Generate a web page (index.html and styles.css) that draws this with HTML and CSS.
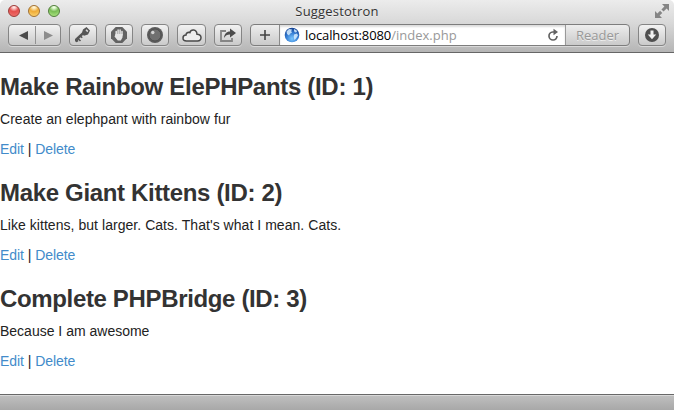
FILE: index.html
```html
<!DOCTYPE html>
<html lang="en">
<head>
<meta charset="utf-8">
<title>Suggestotron</title>
<link rel="stylesheet" href="styles.css">
</head>
<body>
<div class="window">
  <header class="chrome">
    <div class="titlebar">
      <div class="lights"><i class="light red"></i><i class="light yellow"></i><i class="light green"></i></div>
      <span class="title">Suggestotron</span>
      <svg class="expand" width="16" height="16" viewBox="0 0 16 16"><path d="M8 1h7v7l-2.400-2.400-3 3L7.400 6.400l3-3zM1 8v7h7l-2.400-2.400 2.700-2.700-2.200-2.200-2.700 2.700z" fill="#858585"/></svg>
    </div>
    <div class="toolbar">
      <div class="btn nav">
        <svg width="50" height="20" viewBox="0 0 50 20"><path d="M9 10.500l9-4.500v9z" fill="#4b4b4b"/><path d="M25.500 1v18" stroke="#929292"/><path d="M43 10.500L34 6v9z" fill="#8c8c8c"/></svg>
      </div>
      <div class="btn key"><svg width="20" height="20" viewBox="0 0 20 20"><path d="M10 4.500L13.500 2l3.500 3.500-2 4-4 1.300-1-.8-4.800 4.800v1.700l-2 .8-1.200-1.200v-2L9 7.500z" fill="#555"/><path d="M4.500 13l3 3M7 10.500l2.200 2.200" stroke="#555" stroke-width="1.600"/><path d="M13 4.800l1.800 1.800" stroke="#ddd" stroke-width="1.500"/></svg></div>
      <div class="btn hand"><svg width="18" height="18" viewBox="0 0 18 18"><path d="M5.700 1h6.600L17 5.700v6.600L12.300 17H5.700L1 12.300V5.700z" fill="#626262"/><path d="M6.200 9V5.500M8.100 8V4M10.100 8V4M12 9V5.500" stroke="#e4e4e4" stroke-width="1.500" stroke-linecap="round"/><path d="M5.500 8h7.200l-.2 3.500-1.700 3H7.800L4.500 10.500l.5-1z" fill="#e4e4e4"/></svg></div>
      <div class="btn eye"><svg width="18" height="18" viewBox="0 0 18 18"><circle cx="9" cy="9" r="8" fill="#5c5c5c"/><circle cx="9" cy="9" r="6" fill="#707070" stroke="#494949" stroke-width=".8"/><circle cx="6.800" cy="6.500" r="1.700" fill="#d4d4d4"/></svg></div>
      <div class="btn cloud"><svg width="20" height="16" viewBox="0 0 20 16"><path d="M4.500 14C2.500 14 1 12.800 1 11s1.200-3 3-3c0-2 2-3.200 3.800-2.300C9 2 14.500 2 15 7.200c2.300-.1 4 1.300 4 3.400 0 2-1.400 3.400-3.500 3.400z" fill="#ededed" stroke="#494949" stroke-width="1.500"/></svg></div>
      <div class="btn share"><svg width="18" height="16" viewBox="0 0 18 16"><path d="M7 4H2v10h11v-3" fill="none" stroke="#858585" stroke-width="1.800"/><path d="M5 11c.3-4 2.500-6.500 6-6.500V1.500L17 6l-6 4.500v-3c-3 0-4.500 1-6 3.500z" fill="#4c4c4c"/></svg></div>
      <div class="address">
        <div class="plus"><svg width="12" height="12" viewBox="0 0 12 12"><path d="M6 1v10M1 6h10" stroke="#444" stroke-width="1.600"/></svg></div>
        <div class="url">
          <svg class="globe" width="16" height="16" viewBox="0 0 16 16"><defs><radialGradient id="sea" cx=".5" cy=".75" r=".7"><stop offset="0" stop-color="#78c6ff"/><stop offset=".6" stop-color="#3279d0"/><stop offset="1" stop-color="#164697"/></radialGradient></defs><circle cx="8" cy="8" r="7.300" fill="url(#sea)"/><path d="M2.500 4.500L5 2l3 .6-.8 1.700.8 1.200L6 6.700 5 8.500 3 7zM10 7.500l3-1 1 2-2 3-1.500 1.500-.8-3zM10 2l2.500 1.300.5 1.700-2 .5-1-1.500z" fill="#d8efff" opacity=".85"/></svg>
          <span class="host">localhost:8080</span><span class="path">/index.php</span>
          <svg class="reload" width="12" height="14" viewBox="0 0 12 14"><path d="M8.500 4H5.700a4 4 0 1 0 4.300 4" fill="none" stroke="#626262" stroke-width="1.700"/><path d="M6.500.8L11 4 6.500 7.300z" fill="#626262"/></svg>
        </div>
        <div class="reader">Reader</div>
      </div>
      <div class="btn download"><svg width="16" height="16" viewBox="0 0 16 16"><circle cx="8" cy="8" r="7" fill="#4f4f4f"/><path d="M6.500 3.500h3v4h2.700L8 12.300 3.800 7.500h2.700z" fill="#f0f0f0"/></svg></div>
    </div>
  </header>
  <main class="page">
    <section class="topic"><h3 class="rainbow">Make Rainbow ElePHPants (ID: 1)</h3><p>Create an elephpant with rainbow fur</p><p class="links"><a>Edit</a> | <a>Delete</a></p></section>
    <section class="topic"><h3 class="kittens">Make Giant Kittens (ID: 2)</h3><p>Like kittens, but larger. Cats. That's what I mean. Cats.</p><p class="links"><a>Edit</a> | <a>Delete</a></p></section>
    <section class="topic"><h3 class="bridge">Complete PHPBridge (ID: 3)</h3><p class="short">Because I am awesome</p><p class="links"><a>Edit</a> | <a>Delete</a></p></section>
  </main>
  <footer class="statusbar"></footer>
</div>
</body>
</html>
```
FILE: styles.css
```css
* { box-sizing: border-box; }
body { margin: 0; background: #fff; font-family: "Liberation Sans", Arial, sans-serif; }
.window { height: 410px; display: flex; flex-direction: column; overflow: hidden; }
.chrome {
  height: 53px; flex: none;
  background: linear-gradient(#ececec, #d8d8d8 45%, #b5b5b5);
  border-bottom: 1px solid #666;
  border-radius: 5px 5px 0 0;
}
.titlebar { height: 24px; display: flex; justify-content: space-between; padding: 0 4px 0 8px; }
.lights { display: flex; gap: 8px; padding-top: 5px; width: 80px; }
.light { width: 12px; height: 12px; border-radius: 50%; border: 1px solid; }
.red { background: radial-gradient(circle at 50% 10%, #ffe2e0 0 10%, #e5504e 45%, #f17873); border-color: #9c3b38; }
.yellow { background: radial-gradient(circle at 50% 10%, #fff3d0 0 10%, #efab37 45%, #ffdc79); border-color: #a17032; }
.green { background: radial-gradient(circle at 50% 10%, #edffe0 0 10%, #79bd55 45%, #b5ed8a); border-color: #517d3b; }
.title { font: 13px/23px "Open Sans", "Noto Sans", sans-serif; letter-spacing: .2px; color: #333; text-shadow: 0 1px #eee; }
.expand { margin: 3px 0 0 68px; }
.toolbar { display: flex; padding-left: 8px; height: 22px; }
.btn {
  width: 28px; height: 22px; margin-right: 8px; flex: none;
  display: flex; align-items: center; justify-content: center;
  border: 1px solid #858585; border-radius: 4px;
  background: linear-gradient(#f2f2f2, #cacaca);
  box-shadow: 0 1px #d9d9d9;
}
.nav { width: 53px; }
.cloud { width: 29px; }
.address {
  width: 380px; height: 22px; margin-right: 8px; display: flex; flex: none;
  border: 1px solid #7d7d7d; border-radius: 4px; overflow: hidden;
  background: linear-gradient(#ededed, #cacaca);
  box-shadow: 0 1px #d9d9d9;
}
.plus { width: 29px; display: flex; align-items: center; justify-content: center; border-right: 1px solid #8a8a8a; }
.url {
  width: 285px; padding: 0 6px 0 4px; display: flex; align-items: center;
  background: #fff; box-shadow: inset 0 2px 2px #ddd;
  font: 13px/20px "Open Sans", "Noto Sans", sans-serif;
}
.globe { margin-right: 5px; flex: none; }
.host { color: #000; letter-spacing: -.1px; }
.path { color: #999; }
.reload { margin-left: auto; }
.reader { flex: 1; border-left: 1px solid #999; text-align: center; color: #989898; font: 13px/20px "Open Sans", "Noto Sans", sans-serif; text-shadow: 0 1px #eee; }
.page { flex: 1; padding-top: 20px; color: #333; font-size: 14px; line-height: 20px; }
.topic { height: 106px; }
h3 { margin: 0; font-size: 24px; line-height: 27px; font-weight: 700; white-space: nowrap; }
.rainbow { letter-spacing: -.31px; }
.kittens { letter-spacing: -.33px; }
.bridge { letter-spacing: -.35px; }
p { margin: 9px 0 0; white-space: nowrap; color: #222; letter-spacing: .045px; }
.short { letter-spacing: 0; }
.links { margin-top: 10px; letter-spacing: -.06px; }
a { color: #428bca; }
.statusbar { height: 16px; flex: none; border-top: 1px solid #686868; box-shadow: inset 0 1px #d8d8d8; background: linear-gradient(#c0c0c0, #a8a8a8); }
```
